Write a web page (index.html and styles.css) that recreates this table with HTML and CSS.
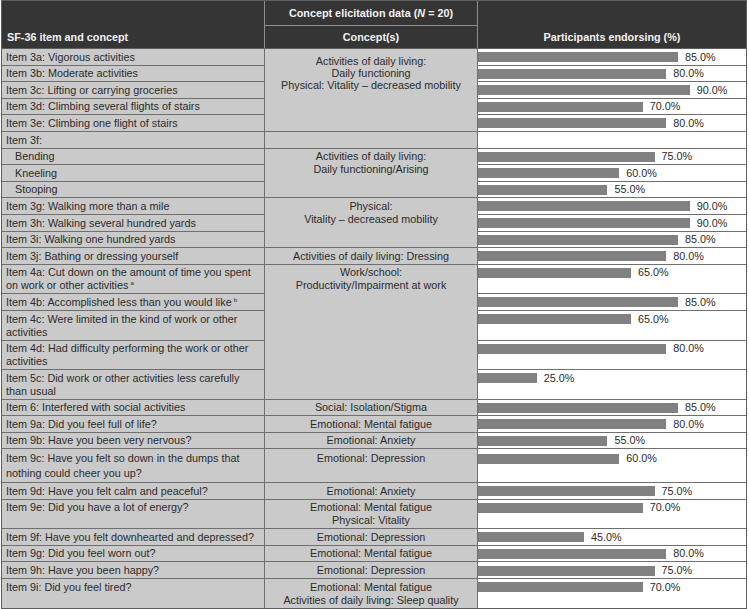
FILE: index.html
```html
<!DOCTYPE html>
<html>
<head>
<meta charset="utf-8">
<link rel="stylesheet" href="styles.css">
</head>
<body>
<div class="sheet">
  <div class="head">
    <div class="h-item"><span>SF-36 item and concept</span></div>
    <div class="h-group"><span>Concept elicitation data (<i>N</i> = 20)</span></div>
    <div class="h-concept"><span>Concept(s)</span></div>
    <div class="h-pct"><span>Participants endorsing (%)</span></div>
  </div>
  <div class="body">
    <div class="item">Item 3a: Vigorous activities</div>
    <div class="concept span5 lowered">Activities of daily living:<br>Daily functioning<br>Physical: Vitality – decreased mobility</div>
    <div class="data"><span class="bar" style="--p:85"></span><span class="val">85.0%</span></div>

    <div class="item">Item 3b: Moderate activities</div>
    <div class="data"><span class="bar" style="--p:80"></span><span class="val">80.0%</span></div>

    <div class="item">Item 3c: Lifting or carrying groceries</div>
    <div class="data"><span class="bar" style="--p:90"></span><span class="val">90.0%</span></div>

    <div class="item">Item 3d: Climbing several flights of stairs</div>
    <div class="data"><span class="bar" style="--p:70"></span><span class="val">70.0%</span></div>

    <div class="item">Item 3e: Climbing one flight of stairs</div>
    <div class="data"><span class="bar" style="--p:80"></span><span class="val">80.0%</span></div>

    <div class="item">Item 3f:</div>
    <div class="concept"></div>
    <div class="data"></div>

    <div class="item sub">Bending</div>
    <div class="concept span3">Activities of daily living:<br>Daily functioning/Arising</div>
    <div class="data"><span class="bar" style="--p:75"></span><span class="val">75.0%</span></div>

    <div class="item sub">Kneeling</div>
    <div class="data"><span class="bar" style="--p:60"></span><span class="val">60.0%</span></div>

    <div class="item sub">Stooping</div>
    <div class="data"><span class="bar" style="--p:55"></span><span class="val">55.0%</span></div>

    <div class="item">Item 3g: Walking more than a mile</div>
    <div class="concept span3">Physical:<br>Vitality – decreased mobility</div>
    <div class="data"><span class="bar" style="--p:90"></span><span class="val">90.0%</span></div>

    <div class="item">Item 3h: Walking several hundred yards</div>
    <div class="data"><span class="bar" style="--p:90"></span><span class="val">90.0%</span></div>

    <div class="item">Item 3i: Walking one hundred yards</div>
    <div class="data"><span class="bar" style="--p:85"></span><span class="val">85.0%</span></div>

    <div class="item">Item 3j: Bathing or dressing yourself</div>
    <div class="concept">Activities of daily living: Dressing</div>
    <div class="data"><span class="bar" style="--p:80"></span><span class="val">80.0%</span></div>

    <div class="item">Item 4a: Cut down on the amount of time you spent on work or other activities<sup>a</sup></div>
    <div class="concept span5">Work/school:<br>Productivity/Impairment at work</div>
    <div class="data"><span class="bar" style="--p:65"></span><span class="val">65.0%</span></div>

    <div class="item">Item 4b: Accomplished less than you would like<sup>b</sup></div>
    <div class="data"><span class="bar" style="--p:85"></span><span class="val">85.0%</span></div>

    <div class="item">Item 4c: Were limited in the kind of work or other activities</div>
    <div class="data"><span class="bar" style="--p:65"></span><span class="val">65.0%</span></div>

    <div class="item">Item 4d: Had difficulty performing the work or other activities</div>
    <div class="data"><span class="bar" style="--p:80"></span><span class="val">80.0%</span></div>

    <div class="item">Item 5c: Did work or other activities less carefully than usual</div>
    <div class="data"><span class="bar" style="--p:25"></span><span class="val">25.0%</span></div>

    <div class="item">Item 6: Interfered with social activities</div>
    <div class="concept">Social: Isolation/Stigma</div>
    <div class="data"><span class="bar" style="--p:85"></span><span class="val">85.0%</span></div>

    <div class="item">Item 9a: Did you feel full of life?</div>
    <div class="concept">Emotional: Mental fatigue</div>
    <div class="data"><span class="bar" style="--p:80"></span><span class="val">80.0%</span></div>

    <div class="item">Item 9b: Have you been very nervous?</div>
    <div class="concept">Emotional: Anxiety</div>
    <div class="data"><span class="bar" style="--p:55"></span><span class="val">55.0%</span></div>

    <div class="item tall">Item 9c: Have you felt so down in the dumps that nothing could cheer you up?</div>
    <div class="concept tall">Emotional: Depression</div>
    <div class="data tall"><span class="bar" style="--p:60"></span><span class="val">60.0%</span></div>

    <div class="item">Item 9d: Have you felt calm and peaceful?</div>
    <div class="concept">Emotional: Anxiety</div>
    <div class="data"><span class="bar" style="--p:75"></span><span class="val">75.0%</span></div>

    <div class="item">Item 9e: Did you have a lot of energy?</div>
    <div class="concept">Emotional: Mental fatigue<br>Physical: Vitality</div>
    <div class="data"><span class="bar" style="--p:70"></span><span class="val">70.0%</span></div>

    <div class="item">Item 9f: Have you felt downhearted and depressed?</div>
    <div class="concept">Emotional: Depression</div>
    <div class="data"><span class="bar" style="--p:45"></span><span class="val">45.0%</span></div>

    <div class="item">Item 9g: Did you feel worn out?</div>
    <div class="concept">Emotional: Mental fatigue</div>
    <div class="data"><span class="bar" style="--p:80"></span><span class="val">80.0%</span></div>

    <div class="item">Item 9h: Have you been happy?</div>
    <div class="concept">Emotional: Depression</div>
    <div class="data"><span class="bar" style="--p:75"></span><span class="val">75.0%</span></div>

    <div class="item">Item 9i: Did you feel tired?</div>
    <div class="concept">Emotional: Mental fatigue<br>Activities of daily living: Sleep quality</div>
    <div class="data"><span class="bar" style="--p:70"></span><span class="val">70.0%</span></div>
  </div>
</div>
</body>
</html>
```

FILE: styles.css
```css
html, body {
  margin: 0;
  padding: 0;
  background: #ffffff;
}

body {
  font-family: "Liberation Sans", Arial, sans-serif;
  font-size: 10.8px;
  color: #2b2b2b;
}

.sheet {
  margin-left: 1px;
  width: 746px;
  box-sizing: border-box;
  padding: 1px;
  background: #5e5e5e;
  display: flex;
  flex-direction: column;
  gap: 1px;
}

.head,
.body {
  display: grid;
  grid-template-columns: 262px 212px 268px;
  gap: 1px;
}

.head {
  grid-template-rows: 24px 22px;
  background: #8e8e8e;
  font-weight: bold;
  color: #f2f2f2;
  line-height: 13px;
}

.head > div {
  background: #353535;
  display: flex;
  padding: 0 6px 4px;
}

.h-item {
  grid-column: 1;
  grid-row: 1 / 3;
  align-items: flex-end;
  justify-content: flex-start;
  padding-left: 5px !important;
}

.h-group {
  grid-column: 2;
  grid-row: 1;
  align-items: center;
  justify-content: center;
  padding-bottom: 0 !important;
  padding-top: 1px !important;
}

.h-concept {
  grid-column: 2;
  grid-row: 2;
  align-items: flex-end;
  justify-content: center;
}

.h-pct {
  grid-column: 3;
  grid-row: 1 / 3;
  align-items: flex-end;
  justify-content: center;
}

.body {
  background: #6f6f6f;
  line-height: 13px;
}

.item,
.concept,
.data {
  padding: 1.6px 4px 1px;
}

.item {
  grid-column: 1;
  background: #cacaca;
}

.item.sub {
  padding-left: 13px;
}

.item sup {
  display: inline-block;
  font-size: 6px;
  line-height: 6px;
  vertical-align: 4px;
  margin-left: 2px;
}

.concept {
  grid-column: 2;
  background: #cacaca;
  text-align: center;
}

.span3 { grid-row: span 3; }
.span5 { grid-row: span 5; }

.concept.lowered {
  padding-top: 6px;
  line-height: 12px;
}

.data {
  grid-column: 3;
  background: #ffffff;
  display: flex;
  align-items: flex-start;
  padding-left: 0;
}

.bar {
  flex: none;
  width: calc(var(--p) * 2.354px);
  height: 10px;
  margin-top: 1.5px;
  background: #818181;
}

.val {
  margin-left: 7px;
}

.tall {
  line-height: 15px;
}

.data.tall .bar {
  margin-top: 2.5px;
}
```
